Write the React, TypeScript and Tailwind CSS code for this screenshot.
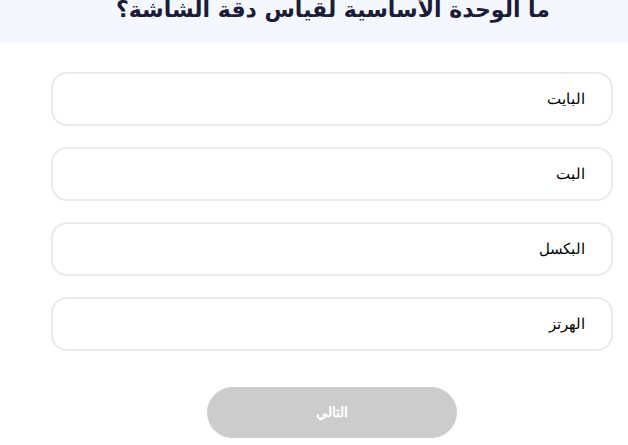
const options = ["البايت", "البت", "البكسل", "الهرتز"];

export default function App() {
  return (
    <div dir="rtl" className="w-[628px] h-[445px] overflow-hidden bg-white font-['Liberation_Sans',sans-serif]">
      {/* header */}
      <div className="h-[43px] bg-[#f4f7fe] overflow-hidden pr-[78px] flex items-end pb-[19px]">
        <h1 className="text-[22px] leading-[28px] font-bold text-[#1c1c3a] font-['DejaVu_Sans',sans-serif]">
          ما الوحدة الأساسية لقياس دقة الشاشة؟
        </h1>
      </div>

      <div className="pr-[15px] pl-[51px] pt-[29px]">
        <div className="flex flex-col gap-[21px]">
          {options.map((o) => (
            <div
              key={o}
              className="h-[54px] rounded-[16px] border-2 border-[#e8eaee] bg-white flex items-center px-[26px] text-[15px] text-black"
            >
              {o}
            </div>
          ))}
        </div>
        <div className="flex justify-center mt-[36px]">
          <button className="w-[250px] h-[51px] rounded-full bg-[#cccccc] text-white text-[14px] font-bold">
            التالي
          </button>
        </div>
      </div>
    </div>
  );
}
